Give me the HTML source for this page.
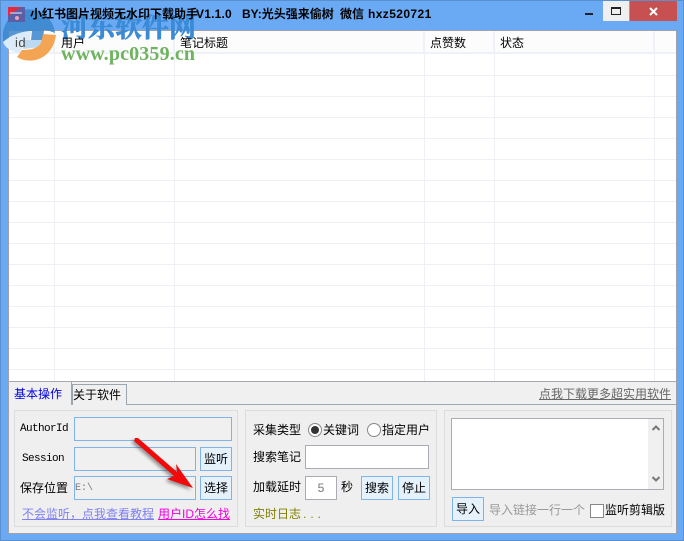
<!DOCTYPE html>
<html><head><meta charset="utf-8">
<style>
*{box-sizing:border-box}
html,body{margin:0;padding:0}
body{width:684px;height:541px;overflow:hidden;position:relative;background:#6aaaf5;font-family:"Liberation Sans","Noto Sans CJK SC",sans-serif;font-size:12px;color:#000}
.a{position:absolute;white-space:nowrap}
.t{position:absolute;white-space:nowrap;line-height:14px;z-index:3}
.in{position:absolute;border:1px solid #7eb4ea;background:#f0f0f0}
.in2{position:absolute;border:1px solid #ababb3;background:#fff}
.btn{position:absolute;border:1px solid #7eb4ea;background:#e5f1fb;text-align:center;font-size:12px;line-height:22px}
.box{position:absolute;border:1px solid #dcdcdc;background:#efefef}
.h{position:absolute;top:31px;height:23px;border-right:2px solid #eef2f8}
.vl{position:absolute;top:54px;height:327px;width:1px;background:#eef0f5}
.hl{position:absolute;left:9px;width:667px;height:1px;background:#eff0f4}
.m{font-family:"Liberation Mono","Noto Sans CJK SC",monospace}
</style></head><body>
<div class="a" style="left:0;top:0;width:684px;height:1px;background:#5a8fce"></div>
<div class="a" style="left:0;top:0;width:1px;height:541px;background:#5a8fce"></div>
<div class="a" style="right:0;top:0;width:1px;height:541px;background:#5a8fce"></div>
<div class="a" style="left:0;bottom:0;width:684px;height:1px;background:#5a8fce"></div>

<!-- window buttons -->
<div class="a" style="left:585px;top:13px;width:8px;height:2px;background:#222"></div>
<div class="a" style="left:603px;top:1px;width:26px;height:20px;background:#efefef"></div>
<div class="a" style="left:611px;top:7px;width:10px;height:8px;border:1px solid #222;border-top:2px solid #222"></div>
<div class="a" style="left:630px;top:1px;width:47px;height:20px;background:#c75050"></div>
<svg class="a" style="left:648px;top:7px" width="11" height="9" viewBox="0 0 11 9"><path d="M2 1 L9 8 M9 1 L2 8" stroke="#fff" stroke-width="2" fill="none"/></svg>

<!-- client area -->
<div class="a" style="left:8px;top:30px;width:669px;height:504px;background:#f0f0f0;border:1px solid #a0a0a8"></div>
<div class="a" style="left:9px;top:31px;width:667px;height:350px;background:#fff"></div>
<div class="a" style="left:9px;top:31px;width:667px;height:23px;background:#fcfcfc;border-bottom:2px solid #eef2f8"></div>
<div class="h" style="left:9px;width:46px"></div>
<div class="h" style="left:55px;width:120px"></div>
<div class="h" style="left:175px;width:250px"></div>
<div class="h" style="left:425px;width:70px"></div>
<div class="h" style="left:495px;width:160px"></div>

<div class="vl" style="left:54px"></div>
<div class="vl" style="left:174px"></div>
<div class="vl" style="left:424px"></div>
<div class="vl" style="left:494px"></div>
<div class="vl" style="left:654px"></div>
<div class="hl" style="top:75px"></div><div class="hl" style="top:96px"></div><div class="hl" style="top:117px"></div>
<div class="hl" style="top:138px"></div><div class="hl" style="top:159px"></div><div class="hl" style="top:180px"></div>
<div class="hl" style="top:201px"></div><div class="hl" style="top:222px"></div><div class="hl" style="top:243px"></div>
<div class="hl" style="top:264px"></div><div class="hl" style="top:285px"></div><div class="hl" style="top:306px"></div>
<div class="hl" style="top:327px"></div><div class="hl" style="top:348px"></div><div class="hl" style="top:369px"></div>

<!-- watermark -->
<svg class="a" style="left:0;top:0" width="60" height="65" viewBox="0 0 60 65">
<path d="M3 38 A26 26 0 0 1 55 33 C50 31 46 30 44 30 L43 40 L31 40 L32 31 C24 31 12 34 3 42 Z" fill="#3a86cc" opacity=".85"/>
<path d="M3 42 C10 36 20 32 31 31 L30 40 L24 40 L21 53 C12 52 5 48 3 42Z" fill="#dcebfa"/>
<path d="M24 40 H43 L41 47 L23 49Z" fill="#bcd9f2"/>
<path d="M17 57 C32 66 53 58 56 35 L43 34 L41 43 C38 48 32 50 22 50 L20 53 Z" fill="#f3a553"/>
</svg>
<div class="a" style="left:8px;top:7px;width:17px;height:15px;background:#5b5fa5"></div>
<svg class="a" style="left:8px;top:7px" width="17" height="15" viewBox="0 0 17 15"><path d="M0 0 H13 L0 9Z" fill="#e8283c"/><circle cx="9" cy="11" r="2" fill="#f0a0b8"/><rect x="2" y="5" width="12" height="2" fill="#c8c0e0" opacity=".7"/></svg>
<div class="a" style="left:61px;top:12px;font-family:'Liberation Serif','Noto Serif CJK SC',serif;font-size:27px;font-weight:bold;line-height:32px;color:#3a8ad6;-webkit-text-stroke:.6px #3a8ad6">河东软件网</div>
<div class="a" style="left:61px;top:44px;font-family:'Liberation Serif',serif;font-size:20px;font-weight:bold;line-height:20px;color:#6fb35f;letter-spacing:.15px">www.pc0359.cn</div>

<!-- title -->
<div class="t" style="left:30px;top:7px;font-weight:bold">小红书图片视频无水印下载助手</div>
<div class="t" style="left:196px;top:7px;font-weight:bold;letter-spacing:.2px">V1.1.0</div>
<div class="t" style="left:242px;top:7px;font-weight:bold">BY:光头强来偷树</div>
<div class="t" style="left:340px;top:7px;font-weight:bold">微信</div>
<div class="t" style="left:368px;top:7px;font-weight:bold;letter-spacing:.4px">hxz520721</div>

<!-- header text -->
<div class="t" style="left:15px;top:36px;color:#444;font-size:13px;letter-spacing:.5px">id</div>
<div class="t" style="left:61px;top:36px">用户</div>
<div class="t" style="left:180px;top:36px">笔记标题</div>
<div class="t" style="left:430px;top:36px">点赞数</div>
<div class="t" style="left:500px;top:36px">状态</div>

<!-- tabs -->
<div class="a" style="left:8px;top:381px;width:669px;height:1px;background:#a8a8b0"></div>
<div class="a" style="left:9px;top:404px;width:667px;height:1px;background:#a0a8b0"></div>
<div class="a" style="left:72px;top:384px;width:55px;height:21px;background:#f0f0f0;border:1px solid #9aa5ae;border-bottom:none"></div>
<div class="a" style="left:9px;top:382px;width:63px;height:23px;background:#f0f0f0;border-right:1px solid #9aa5ae"></div>
<div class="t" style="left:14px;top:387px;color:#0000e0">基本操作</div>
<div class="t" style="left:73px;top:388px">关于软件</div>
<div class="t" style="left:539px;top:387px;color:#666;text-decoration:underline">点我下载更多超实用软件</div>

<!-- panel 1 -->
<div class="box" style="left:14px;top:410px;width:224px;height:117px"></div>
<div class="t m" style="left:20px;top:422px;font-size:11px;letter-spacing:-.6px">AuthorId</div>
<div class="in" style="left:74px;top:417px;width:158px;height:24px"></div>
<div class="t m" style="left:22px;top:452px;font-size:11px;letter-spacing:-.6px">Session</div>
<div class="in" style="left:74px;top:447px;width:122px;height:24px"></div>
<div class="btn" style="left:200px;top:447px;width:32px;height:24px">监听</div>
<div class="t" style="left:20px;top:481px">保存位置</div>
<div class="in" style="left:74px;top:476px;width:122px;height:24px"></div>
<div class="t m" style="left:75px;top:482px;font-size:10px;color:#777">E:\</div>
<div class="btn" style="left:200px;top:476px;width:32px;height:24px">选择</div>
<div class="t" style="left:22px;top:507px;color:#8080f0;text-decoration:underline">不会监听，点我查看教程</div>
<div class="t" style="left:158px;top:507px;color:#f000e0;text-decoration:underline">用户ID怎么找</div>

<!-- arrow -->
<svg class="a" style="left:130px;top:435px;z-index:4" width="75" height="60" viewBox="0 0 75 60">
<defs><filter id="s" x="-20%" y="-20%" width="140%" height="140%"><feGaussianBlur stdDeviation="1.5"/></filter></defs>
<g transform="translate(-2,2)" filter="url(#s)" opacity=".5"><path d="M5 3 L8 3 L47 37 L46 29 L63 53 L37 44 L44 41 L4 6Z" fill="#333"/></g>
<path d="M5 3 L8 3 L47 37 L46 29 L63 53 L37 44 L44 41 L4 6Z" fill="#f00a0a"/>
</svg>

<!-- panel 2 -->
<div class="box" style="left:245px;top:410px;width:192px;height:117px"></div>
<div class="t" style="left:253px;top:423px">采集类型</div>
<div class="a" style="left:308px;top:423px;width:14px;height:14px;border-radius:50%;border:1px solid #888;background:#fff"></div>
<div class="a" style="left:311px;top:426px;width:8px;height:8px;border-radius:50%;background:#333"></div>
<div class="t" style="left:323px;top:423px">关键词</div>
<div class="a" style="left:367px;top:423px;width:14px;height:14px;border-radius:50%;border:1px solid #888;background:#fff"></div>
<div class="t" style="left:382px;top:423px">指定用户</div>
<div class="t" style="left:253px;top:450px">搜索笔记</div>
<div class="in2" style="left:305px;top:445px;width:124px;height:24px"></div>
<div class="t" style="left:253px;top:480px">加载延时</div>
<div class="in2" style="left:305px;top:476px;width:32px;height:24px;text-align:center;color:#777;line-height:22px">5</div>
<div class="t" style="left:341px;top:480px">秒</div>
<div class="btn" style="left:361px;top:476px;width:32px;height:24px">搜索</div>
<div class="btn" style="left:398px;top:476px;width:32px;height:24px">停止</div>
<div class="t" style="left:253px;top:507px;color:#808000;letter-spacing:0">实时日志<span style="letter-spacing:4px;margin-left:2px">...</span></div>

<!-- panel 3 -->
<div class="box" style="left:444px;top:410px;width:228px;height:117px"></div>
<div class="in2" style="left:451px;top:418px;width:213px;height:72px"></div>
<div class="a" style="left:648px;top:419px;width:15px;height:70px;background:#f0f0f0"></div>
<svg class="a" style="left:650px;top:424px" width="12" height="60" viewBox="0 0 12 60">
<path d="M2.500 6 L6 2.500 L9.500 6" fill="none" stroke="#777" stroke-width="2"/>
<path d="M2.500 53 L6 56.500 L9.500 53" fill="none" stroke="#777" stroke-width="2"/>
</svg>
<div class="btn" style="left:452px;top:497px;width:32px;height:24px">导入</div>
<div class="t" style="left:489px;top:503px;color:#999">导入链接一行一个</div>
<div class="a" style="left:590px;top:504px;width:14px;height:14px;border:1px solid #888;background:#fff"></div>
<div class="t" style="left:605px;top:503px">监听剪辑版</div>
</body></html>
